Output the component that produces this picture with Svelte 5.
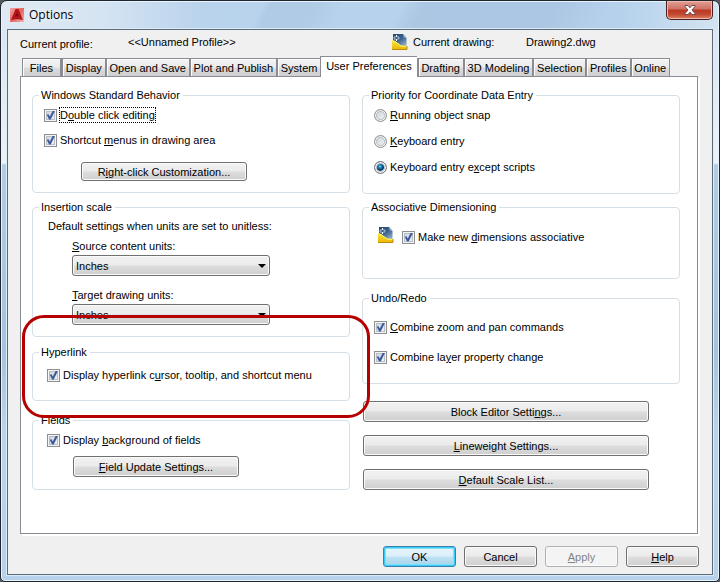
<script>
  const tabs = [
    'Files', 'Display', 'Open and Save', 'Plot and Publish', 'System', 'User Preferences',
    'Drafting', '3D Modeling', 'Selection', 'Profiles', 'Online'
  ];
  let active = $state('User Preferences');

  let checks = $state({
    dbl: true, shortcut: true, hyperlink: true, fields: true,
    assoc: true, zoom: true, layer: true
  });
  let priority = $state('except');
  let source = $state('Inches');
  let target = $state('Inches');

  const priorities = [
    { id: 'running', text: '&Running object snap' },
    { id: 'keyboard', text: '&Keyboard entry' },
    { id: 'except', text: 'Keyboard entry e&xcept scripts' }
  ];
  const units = ['Inches', 'Feet', 'Millimeters', 'Centimeters', 'Meters'];
</script>

<!-- An ampersand marks the access key, which is underlined. -->
{#snippet keyed(text)}
  {@const i = text.indexOf('&')}
  {#if i < 0}<span>{text}</span>{:else}<span>{text.slice(0, i)}<u>{text[i + 1]}</u>{text.slice(i + 2)}</span>{/if}
{/snippet}

{#snippet check(id, text, focused)}
  <label class="option" class:focused>
    <input type="checkbox" bind:checked={checks[id]} />
    {@render keyed(text)}
  </label>
{/snippet}

{#snippet drawingIcon()}
  <svg class="drawing" width="16" height="17" viewBox="0 0 16 17" aria-hidden="true">
    <defs>
      <linearGradient id="sheet" x1="0" y1="0" x2="0.6" y2="1">
        <stop offset="0" stop-color="#23476f" /><stop offset="0.500" stop-color="#3c628c" /><stop offset="1" stop-color="#9db4cc" />
      </linearGradient>
      <linearGradient id="gold" x1="0" y1="0" x2="0" y2="1">
        <stop offset="0" stop-color="#fbe93c" /><stop offset="1" stop-color="#e9b400" />
      </linearGradient>
    </defs>
    <path d="M1 0H11L14.500 4V15H1Z" fill="url(#sheet)" />
    <path d="M11 0L11.500 3.500L14.500 4Z" fill="#8fa9c3" />
    <path d="M0 6L3 7L9 11.500L15 12V16H0Z" fill="url(#gold)" />
    <path d="M0 6.500L3 7.500L9 12L15 12.500" fill="none" stroke="#fff27a" />
    <path d="M0 15.500H15V12" fill="none" stroke="#c08a10" />
    <path d="M4.500 1V3M4.500 5V7M1.500 4H3.500M5.500 4H7.500" stroke="#f2f7fc" />
    <path d="M2.500 2L3.500 3M5.500 5L6.500 6M6.500 2L5.500 3M3.500 5L2.500 6" stroke="#b4c8dc" />
  </svg>
{/snippet}

{#snippet unitSelect(id, text, value, change)}
  <div class="unit">
    <label for={id}>{@render keyed(text)}</label>
    <div class="select">
      <select {id} {value} onchange={(e) => change(e.currentTarget.value)}>
        {#each units as unit}<option>{unit}</option>{/each}
      </select>
      <svg width="8" height="4" viewBox="0 0 8 4" aria-hidden="true"><path d="M0 0H8L4 4Z" fill="#000" /></svg>
    </div>
  </div>
{/snippet}

<div class="window">
  <header class="titlebar">
    <svg width="14" height="14" viewBox="0 0 14 14" aria-hidden="true">
      <defs>
        <linearGradient id="logo" x1="0" y1="0" x2="1" y2="1">
          <stop offset="0" stop-color="#f5a9a4" /><stop offset="0.500" stop-color="#e2655f" /><stop offset="1" stop-color="#f3b5b0" />
        </linearGradient>
      </defs>
      <rect width="14" height="14" fill="url(#logo)" />
      <path d="M5.500 1H8.500L13 12L9.500 11L7 9.500L4.500 11L1 12Z" fill="#b5141a" />
      <path d="M7 4L8.500 8.500L7 8L5 9Z" fill="#7c0a10" />
      <path d="M1 12L4.500 11L7 9.500L9.500 11L13 12L7 11Z" fill="#8a0c12" />
    </svg>
    <h1>Options</h1>
    <button class="close" aria-label="Close">
      <svg width="12" height="10" viewBox="0 0 12 10" aria-hidden="true">
        <path d="M1 0.500H4L6 2.800L8 0.500H11V1.500L8 5L11 8.500V9.500H8L6 7.200L4 9.500H1V8.500L4 5L1 1.500Z" fill="#fff" stroke="#6a4a4e" />
      </svg>
    </button>
  </header>

  <main class="client">
    <div class="summary">
      <span class="profile">Current profile:</span>
      <span>&lt;&lt;Unnamed Profile&gt;&gt;</span>
      <span class="current">{@render drawingIcon()}Current drawing:</span>
      <span>Drawing2.dwg</span>
    </div>

    <div class="tabs" role="tablist">
      {#each tabs as tab}
        <button role="tab" class:active={active === tab} aria-selected={active === tab} onclick={() => (active = tab)}>{tab}</button>
      {/each}
    </div>

    <section class="panel">
      <div class="column">
        <fieldset class="standard">
          <legend>Windows Standard Behavior</legend>
          {@render check('dbl', 'D&ouble click editing', true)}
          {@render check('shortcut', 'Shortcut &menus in drawing area')}
          <button class="push">{@render keyed('R&ight-click Customization...')}</button>
        </fieldset>

        <fieldset class="scale">
          <legend>Insertion scale</legend>
          <p>Default settings when units are set to unitless:</p>
          {@render unitSelect('source', '&Source content units:', source, (v) => (source = v))}
          {@render unitSelect('target', '&Target drawing units:', target, (v) => (target = v))}
        </fieldset>

        <div class="highlighted">
          <fieldset class="hyperlink">
            <legend>Hyperlink</legend>
            {@render check('hyperlink', 'Display hyperlink c&ursor, tooltip, and shortcut menu')}
          </fieldset>
          <div class="callout"></div>
        </div>

        <fieldset class="fields">
          <legend>Fields</legend>
          {@render check('fields', 'Display &background of fields')}
          <button class="push">{@render keyed('&Field Update Settings...')}</button>
        </fieldset>
      </div>

      <div class="column">
        <fieldset class="priority">
          <legend>Priority for Coordinate Data Entry</legend>
          {#each priorities as p}
            <label class="option">
              <input type="radio" name="priority" value={p.id} bind:group={priority} />
              {@render keyed(p.text)}
            </label>
          {/each}
        </fieldset>

        <fieldset class="assoc">
          <legend>Associative Dimensioning</legend>
          {@render drawingIcon()}
          {@render check('assoc', 'Make new &dimensions associative')}
        </fieldset>

        <fieldset class="undo">
          <legend>Undo/Redo</legend>
          {@render check('zoom', '&Combine zoom and pan commands')}
          {@render check('layer', 'Combine la&yer property change')}
        </fieldset>

        <div class="more">
          <button class="push">{@render keyed('Block Editor Setti&ngs...')}</button>
          <button class="push">{@render keyed('&Lineweight Settings...')}</button>
          <button class="push">{@render keyed('&Default Scale List...')}</button>
        </div>
      </div>
    </section>

    <footer>
      <button class="push default">OK</button>
      <button class="push">Cancel</button>
      <button class="push" disabled>{@render keyed('&Apply')}</button>
      <button class="push">{@render keyed('&Help')}</button>
    </footer>
  </main>
</div>

<style>
  :global(body) {
    background: #55595e;
  }
  .window {
    box-sizing: border-box;
    border: 1px solid #20262e;
    border-radius: 7px 7px 5px 5px;
    padding: 0 6px 6px;
    font: 11px/14px 'Liberation Sans', Arial, sans-serif;
    color: #000;
    box-shadow: inset 0 0 0 1px #e8f4fd;
    background:
      linear-gradient(115deg, transparent 36%, #a4c0dc66 37% 43%, transparent 47% 55%, #a4c0dc99 58% 76%, transparent 84%) 0 0 / 100% 29px no-repeat,
      linear-gradient(90deg, #dfe9f3 0, #d5e4f2 14%, #b9d3ec 28%, #b5d1ec 86%, #d3e3f1 100%) 0 0 / 100% 29px no-repeat,
      linear-gradient(#d5e3f0 0, #edf2f8 162px, #b0cce7 164px, #a5c3e0 350px, #b9d4ee 430px, #b5d1ec);
  }
  .titlebar {
    display: flex;
    align-items: center;
    gap: 5px;
    height: 28px;
    padding-left: 3px;
  }
  h1 {
    flex: 1;
    margin: 0;
    font: 12px/16px 'Open Sans', 'Noto Sans', sans-serif;
    text-shadow: 0 0 6px #fff, 0 0 10px #fff;
  }
  .close {
    align-self: flex-start;
    display: grid;
    place-items: center;
    width: 47px;
    height: 19px;
    padding: 0;
    border: 1px solid #4a1d20;
    border-top: 0;
    border-radius: 0 0 5px 5px;
    box-shadow: inset 0 0 0 1px #f0b8ac;
    background: linear-gradient(#e2a197 0, #cf6f61 45%, #b93824 50%, #c24a33 75%, #dd8560 100%);
  }
  .client {
    display: flow-root;
    border: 1px solid #5a6b7c;
    box-shadow: 0 0 0 1px #dcebf8;
    background: #f0f0f0;
  }

  .summary {
    display: grid;
    grid-template-columns: 108px 1fr 134px 186px;
    align-items: center;
    height: 24px;
    padding: 0 0 2px 12px;
  }
  .profile {
    padding-top: 4px;
  }
  .current {
    display: flex;
    align-items: center;
    gap: 5px;
  }
  .drawing {
    flex: none;
  }

  .tabs {
    display: flex;
    align-items: flex-end;
    height: 20px;
    padding: 0 42px 0 14px;
  }
  .tabs button {
    flex: 1 1 auto;
    height: 18px;
    margin: 0;
    padding: 0 2px;
    border: 1px solid #898c95;
    border-bottom: 0;
    border-left-width: 2px;
    background: linear-gradient(#f3f3f3 0, #ebebeb 48%, #dcdcdc 52%, #cfcfcf 100%);
    box-shadow: inset 1px 1px 0 #fcfcfc;
    font: inherit;
    color: inherit;
    white-space: nowrap;
  }
  .tabs button:first-child {
    border-left-width: 1px;
    padding: 0 6px;
  }
  .tabs button + button {
    border-right-width: 0;
  }
  .tabs button:last-child {
    border-right-width: 1px;
  }
  .tabs .active {
    position: relative;
    height: 21px;
    margin-bottom: -1px;
    padding: 0 4px 3px;
    border-left-width: 1px;
    background: #fff;
    box-shadow: none;
  }

  .panel {
    display: grid;
    grid-template-columns: 1fr 1fr;
    gap: 12px;
    margin: 0 14px 0 12px;
    padding: 11px 17px 43px 11px;
    border: 1px solid #898c95;
    box-shadow: 2px 2px 0 #fff;
    background: #fff;
  }
  .column {
    display: flex;
    flex-direction: column;
  }
  fieldset {
    display: flex;
    flex-direction: column;
    align-items: flex-start;
    min-width: 0;
    margin: 0;
    padding: 6px 11px 11px;
    border: 1px solid #d5dfe5;
    border-radius: 4px;
  }
  legend {
    margin-left: -5px;
    padding: 0 3px 0 2px;
    line-height: 14px;
  }
  p {
    margin: 0;
  }
  u {
    text-underline-offset: 1px;
    text-decoration-thickness: 1px;
  }

  .option {
    display: flex;
    align-items: center;
    gap: 3px;
    height: 14px;
    white-space: nowrap;
  }
  .focused span {
    outline: 1px dotted #000;
  }
  input {
    flex: none;
    appearance: none;
    box-sizing: border-box;
    width: 13px;
    height: 13px;
    margin: 0;
    border: 1px solid #8e8f8f;
    box-shadow: inset 0 0 0 1px #f4f4f4, inset 0 0 0 2px #b9bfc8;
    background: linear-gradient(135deg, #cbcfd5, #f6f6f6);
  }
  input[type='checkbox'] {
    display: grid;
    place-items: center;
  }
  input[type='checkbox']:checked::after {
    content: '';
    width: 9px;
    height: 9px;
    background: #3c5a9c;
    clip-path: polygon(8% 48%, 28% 42%, 42% 66%, 76% 0, 100% 4%, 52% 100%, 34% 100%);
  }
  input[type='radio'] {
    border-radius: 50%;
  }
  input[type='radio']:checked {
    border-color: #6c7379;
    background: radial-gradient(circle at 45% 40%, #9fe4fb 0, #2f9bd0 1px, #0d4d7c 3px, #0b3352 4px, #e4eaee 5px);
  }

  .push {
    box-sizing: border-box;
    height: 21px;
    padding: 0 8px;
    border: 1px solid #707070;
    border-radius: 3px;
    box-shadow: inset 0 0 0 1px #fafafa;
    background: linear-gradient(#f2f2f2 0, #ebebeb 48%, #dddddd 52%, #cfcfcf 100%);
    font: inherit;
    color: inherit;
    white-space: nowrap;
  }
  .push:disabled {
    border-color: #adb2b5;
    background: #f4f4f4;
    color: #838383;
  }
  .default {
    border-color: #3c7fb1;
    box-shadow: inset 0 0 0 1px #35cdf5, inset 0 0 0 2px #7fe0f8;
    background: linear-gradient(#e8f5fb 0, #dceff9 48%, #c0e2f4 52%, #a5d3ec 100%);
  }

  .standard {
    gap: 11px;
  }
  .standard .push {
    width: 166px;
    height: 19px;
    margin: 4px 0 0 37px;
  }
  .scale {
    margin-top: 7px;
    padding: 5px 11px 11px 15px;
  }
  .unit {
    display: flex;
    flex-direction: column;
    gap: 2px;
    width: 198px;
    margin: 6px 0 0 24px;
  }
  .unit + .unit {
    margin-top: 12px;
  }
  .select {
    position: relative;
  }
  select {
    display: block;
    appearance: none;
    box-sizing: border-box;
    width: 100%;
    height: 21px;
    padding: 0 20px 0 3px;
    border: 1px solid #707070;
    border-radius: 3px;
    box-shadow: inset 0 0 0 1px #fafafa;
    background: linear-gradient(#f2f2f2 0, #ebebeb 48%, #dddddd 52%, #cfcfcf 100%);
    font: inherit;
    color: inherit;
  }
  .select svg {
    position: absolute;
    right: 4px;
    top: 9px;
    pointer-events: none;
  }
  .highlighted {
    position: relative;
    z-index: 1;
    margin-top: 8px;
  }
  .hyperlink {
    padding: 9px 14px 18px;
  }
  .callout {
    position: absolute;
    inset: -30px -20px -17px -10px;
    border: 3px solid #b60000;
    border-radius: 22px;
    pointer-events: none;
  }
  .fields {
    margin-top: 12px;
    padding: 6px 14px 12px;
  }
  .hyperlink legend,
  .fields legend {
    margin-left: -8px;
  }
  .scale legend,
  .assoc legend {
    margin-left: -9px;
  }
  .fields .push {
    width: 166px;
    margin: 9px 0 0 26px;
  }

  .priority {
    gap: 12px;
    padding-bottom: 19px;
  }
  .assoc {
    flex-direction: row;
    align-items: flex-end;
    gap: 8px;
    margin-top: 6px;
    padding: 13px 15px 34px;
  }
  .undo {
    gap: 16px;
    margin-top: 12px;
    padding: 15px 11px 19px;
  }
  .more {
    display: flex;
    flex-direction: column;
    gap: 13px;
    margin: 17px 31px 0 1px;
  }

  footer {
    display: flex;
    justify-content: flex-end;
    gap: 8px;
    padding: 12px 13px 7px;
  }
  footer .push {
    width: 73px;
  }
</style>
